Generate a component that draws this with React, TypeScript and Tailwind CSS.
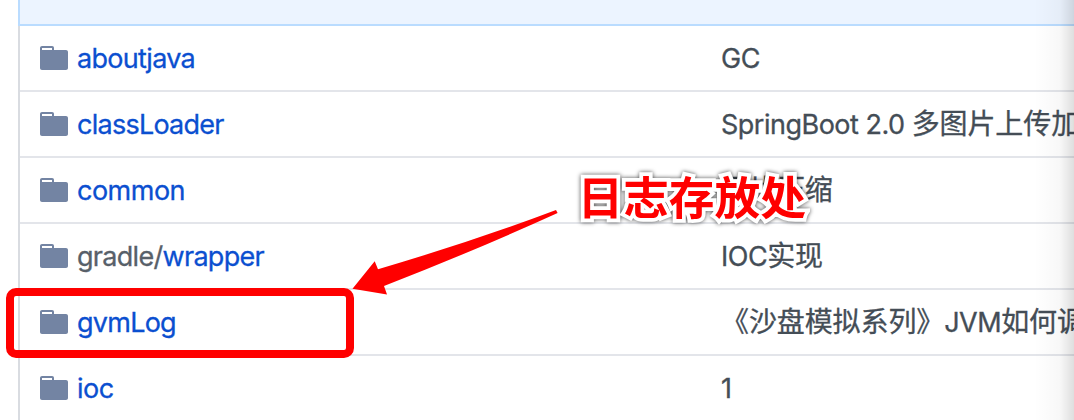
type Part = { text: string; cjk?: boolean };

type Row = {
  prefix?: string;
  name: string;
  spacing: string;
  message: Part[];
};

const rows: Row[] = [
  { name: "aboutjava", spacing: "tracking-[-0.72px]", message: [{ text: "GC" }] },
  {
    name: "classLoader",
    spacing: "tracking-[-0.75px]",
    message: [{ text: "SpringBoot 2.0 " }, { text: "多图片上传加载", cjk: true }],
  },
  { name: "common", spacing: "tracking-[-0.5px]", message: [{ text: "图片压缩", cjk: true }] },
  {
    prefix: "gradle/",
    name: "wrapper",
    spacing: "tracking-[-0.7px]",
    message: [{ text: "IOC" }, { text: "实现", cjk: true }],
  },
  {
    name: "gvmLog",
    spacing: "tracking-[-0.75px]",
    message: [{ text: "《沙盘模拟系列》", cjk: true }, { text: "JVM" }, { text: "如何调优", cjk: true }],
  },
  { name: "ioc", spacing: "tracking-[-0.5px]", message: [{ text: "1" }] },
];

function FolderIcon() {
  return (
    <svg viewBox="0 0 14 16" className="h-8 w-7 shrink-0 fill-[#7384a3]" aria-hidden="true">
      <path
        fillRule="evenodd"
        d="M13 4H7V3c0-.66-.31-1-1-1H1c-.55 0-1 .45-1 1v10c0 .55.45 1 1 1h12c.55 0 1-.45 1-1V5c0-.55-.45-1-1-1zM6 4H1V3h5v1z"
      />
    </svg>
  );
}

function FileRow({ row }: { row: Row }) {
  return (
    <div className="flex h-[66px] shrink-0 items-center border-b-2 border-[#e3e5ea] pl-5">
      <FolderIcon />
      <div
        className={`w-[653px] shrink-0 pt-0.5 pl-[9px] text-[#0b4fd0] [-webkit-text-stroke:0.3px_currentColor] ${row.spacing}`}
      >
        {row.prefix && <span className="text-[#586069]">{row.prefix}</span>}
        <span>{row.name}</span>
      </div>
      <div className="shrink-0 pt-0.5 tracking-[-0.5px] whitespace-pre text-[#444d56] [-webkit-text-stroke:0.3px_currentColor]">
        {row.message.map((part) => (
          <span key={part.text} className={part.cjk ? "text-[28px] leading-none tracking-[-0.1px]" : ""}>
            {part.text}
          </span>
        ))}
      </div>
    </div>
  );
}

export default function App() {
  return (
    <div className="relative h-[420px] w-[1074px] overflow-hidden bg-white pl-[18px] font-['Inter','Noto_Sans_CJK_SC',sans-serif] text-[27px] leading-8">
      <div className="h-[26px] border-b-2 border-l-2 border-[#badcff] bg-[#ecf4ff]" />
      <div className="flex h-[394px] flex-col overflow-hidden border-l-2 border-[#d9dce1]">
        {rows.map((row) => (
          <FileRow key={row.name} row={row} />
        ))}
      </div>
      <div className="absolute inset-y-0 right-0 w-10 bg-linear-to-r from-black/0 via-black/3 via-65% to-black/13" />
      <div className="absolute top-[288px] left-[6px] h-[70px] w-[348px] rounded-[10px] border-8 border-[#ff0000]" />
      <svg viewBox="0 0 1074 420" className="absolute inset-0 h-[420px] w-[1074px] fill-[#ff0000]" aria-hidden="true">
        <path d="M352.5 288.7 L374.7 261.3 L378 269.2 Q474 241 556 210 L557.6 213 Q474 251 384 286 L387 294.5 Z" />
      </svg>
      <div className="absolute top-[166px] left-[577.5px] text-[45.7px] leading-[66px] font-bold whitespace-nowrap text-[#ff0000] drop-shadow-[0_0_2px_rgba(0,0,0,0.7)] [-webkit-text-stroke:7.5px_white] [paint-order:stroke_fill]">
        日志存放处
      </div>
    </div>
  );
}
